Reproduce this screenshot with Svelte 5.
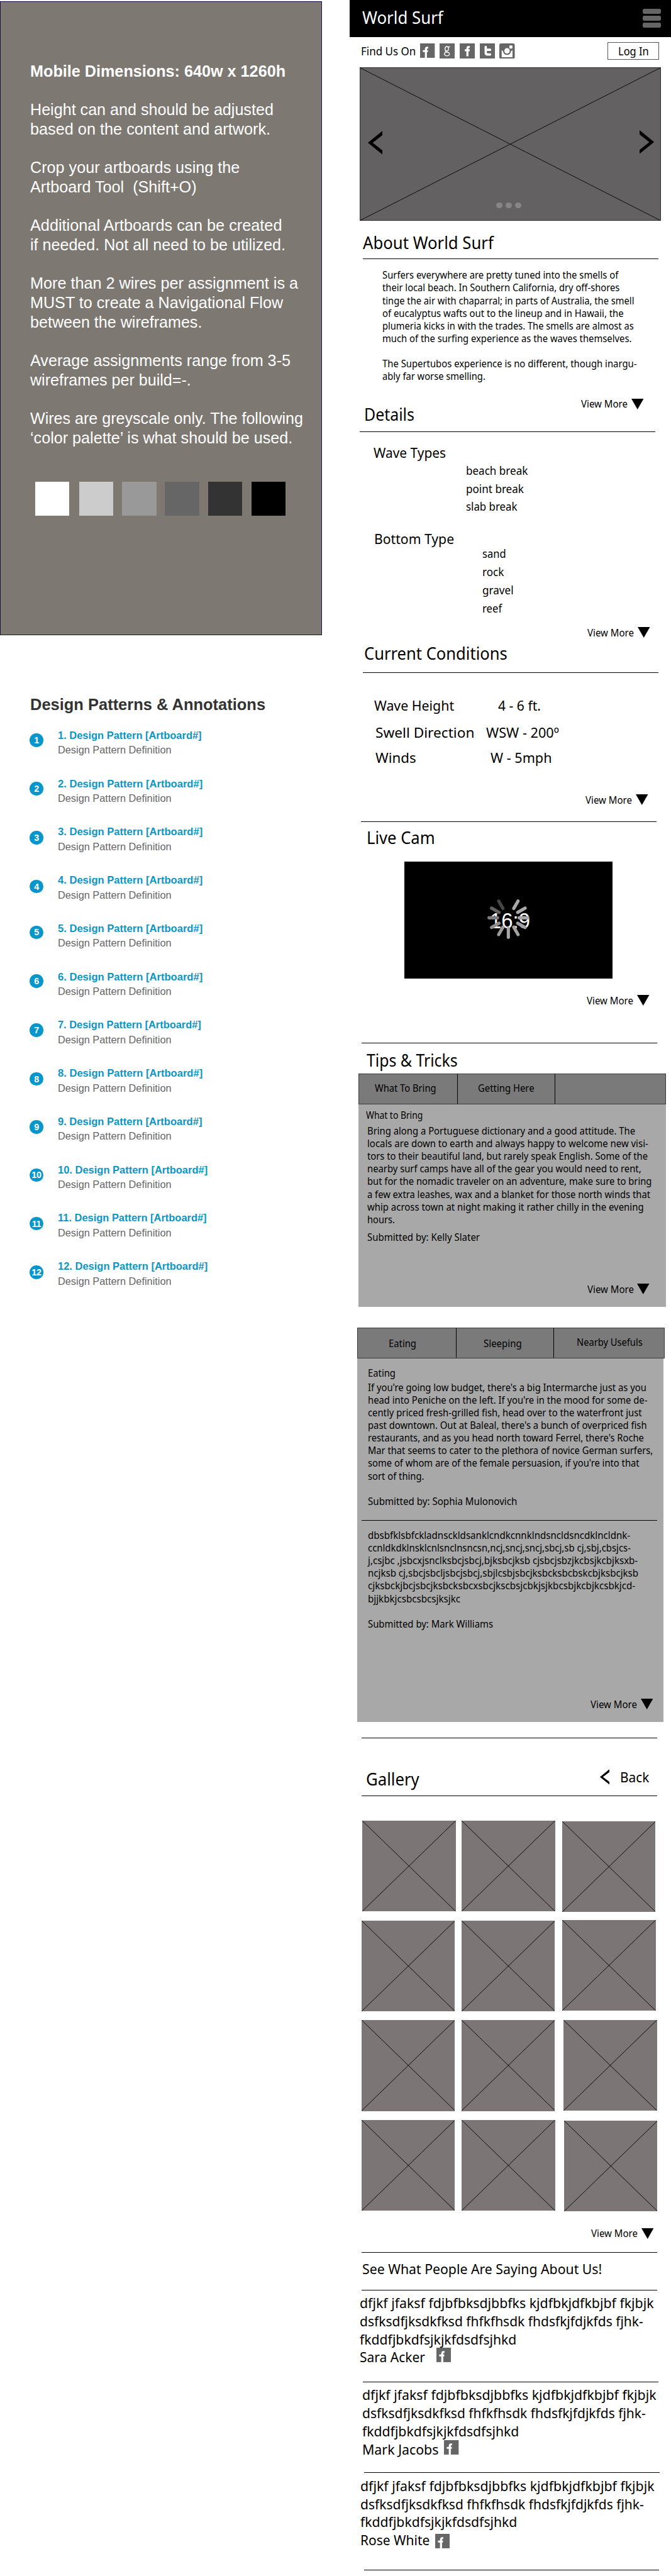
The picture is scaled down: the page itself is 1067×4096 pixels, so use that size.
<script>
  const REM = 7.993;

  // Squeezes a line of text horizontally so it spans the given width (in rem).
  function fit(node, width) {
    const natural = node.getBoundingClientRect().width;
    if (width && natural) node.style.transform = `scaleX(${(width * REM) / natural})`;
  }

  const brief = [
    ['Mobile Dimensions: 640w x 1260h', 50.8, true], null,
    ['Height can and should be adjusted', 48.4],
    ['based on the content and artwork.', 47.8], null,
    ['Crop your artboards using the', 41.7],
    ['Artboard Tool \u00a0(Shift+O)', 33.1], null,
    ['Additional Artboards can be created', 50.1],
    ['if needed. Not all need to be utilized.', 50.8], null,
    ['More than 2 wires per assignment is a', 53.3],
    ['MUST to create a Navigational Flow', 50.3],
    ['between the wireframes.', 34.2], null,
    ['Average assignments range from 3-5', 51.8],
    ['wireframes per build=-.', 32], null,
    ['Wires are greyscale only. The following', 54.3],
    ['‘color palette’ is what should be used.', 52.2]
  ];

  const swatches = [
    ['#ffffff', 6.9], ['#cccccc', 1.9], ['#999999', 1.8],
    ['#666666', 1.7], ['#333333', 1.8], ['#000000', 1.8]
  ];

  const patterns = [
    [0, 28.6], [0.04, 28.8], [0.16, 28.8], [0.28, 28.8], [-0.23, 28.8], [-0.1, 28.8],
    [0.01, 28.5], [0.14, 28.8], [0.11, 28.7], [0.06, 29.8], [0.11, 29.6], [0.23, 29.8]
  ];

  const about = [
    ['Surfers everywhere are pretty tuned into the smells of', 46.95],
    ['their local beach. In Southern California, dry off-shores', 47.2],
    ['tinge the air with chaparral; in parts of Australia, the smell', 50.1],
    ['of eucalyptus wafts out to the lineup and in Hawaii, the', 48],
    ['plumeria kicks in with the trades. The smells are almost as', 50],
    ['much of the surfing experience as the waves themselves.', 49.6],
    null,
    ['The Supertubos experience is no different, though inargu-', 50.6],
    ['ably far worse smelling.', 20.5]
  ];

  const waves = [['beach break', 12.3], ['point break', 11.5], ['slab break', 10.2]];
  const bottoms = [['sand', 4.7], ['rock', 4.3], ['gravel', 6.2], ['reef', 3.9]];

  const bring = [
    ['Bring along a Portuguese dictionary and a good attitude. The', 53.3],
    ['locals are down to earth and always happy to welcome new visi-', 55.9],
    ['tors to their beautiful land, but rarely speak English. Some of the', 55.8],
    ['nearby surf camps have all of the gear you would need to rent,', 54.5],
    ['but for the nomadic traveler on an adventure, make sure to bring', 56.6],
    ['a few extra leashes, wax and a blanket for those north winds that', 56.3],
    ['whip across town at night making it rather chilly in the evening', 55],
    ['hours.', 5.5]
  ];

  const eating = [
    ["If you're going low budget, there's a big Intermarche just as you", 55.4],
    ["head into Peniche on the left. If you're in the mood for some de-", 55.6],
    ['cently priced fresh-grilled fish, head over to the waterfront just', 54.5],
    ["past downtown. Out at Baleal, there's a bunch of overpriced fish", 55.5],
    ["restaurants, and as you head north toward Ferrel, there's Roche", 54.9],
    ['Mar that seems to cater to the plethora of novice German surfers,', 56.7],
    ["some of whom are of the female persuasion, if you're into that", 54],
    ['sort of thing.', 11.2]
  ];

  const filler = [
    ['dbsbfklsbfckladnsckldsanklcndkcnnklndsncldsncdklncldnk-', 52.2],
    ['ccnldkdklnsklcnlsnclnsncsn,ncj,sncj,sncj,sbcj,sb cj,sbj,cbsjcs-', 52.3],
    ['j,csjbc ,jsbcxjsnclksbcjsbcj,bjksbcjksb cjsbcjsbzjkcbsjkcbjksxb-', 53.7],
    ['ncjksb cj,sbcjsbcljsbcjsbcj,sbjlcsbjsbcjksbcksbcbskcbjksbcjksb', 53.8],
    ['cjksbckjbcjsbcjksbcksbcxsbcjkscbsjcbkjsjkbcsbjkcbjkcsbkjcd-', 53.2],
    ['bjjkbkjcsbcsbcsjksjkc', 18.4]
  ];

  const quote = [
    ['dfjkf jfaksf fdjbfbksdjbbfks kjdfbkjdfkbjbf fkjbjk', 58.5],
    ['dsfksdfjksdkfksd fhfkfhsdk fhdsfkjfdjkfds fjhk-', 56.4],
    ['fkddfjbkdfsjkjkfdsdfsjhkd', 31.2]
  ];

  // left margin and top nudge of every thumbnail, row by row
  const gallery = [
    [[2.59, 0], [1.2, 0], [1.33, 0.1]],
    [[2.38, 0], [1.33, 0], [1.49, -0.1]],
    [[2.38, 0], [1.33, 0], [1.7, -0.05]],
    [[2.38, 0], [1.41, 0], [1.71, 0.06]]
  ];

  const spokes = [
    [30, '#a9a9a9'], [60, '#a9a9a9'], [90, '#a6a6a6'], [120, '#a0a0a0'], [150, '#a3a3a3'],
    [180, '#a6a6a6'], [210, '#9b9b9b'], [240, '#8e8e8e'], [270, '#7c7c7c'],
    [300, '#636363'], [330, '#454545']
  ];
</script>

{#snippet line(t, w, cls = '')}
  <span class="line {cls}"><span class="fit" use:fit={w}>{t}</span></span>
{/snippet}

{#snippet lines(list, cls)}
  {#each list as l}
    {#if l}
      <span class="line {cls}" class:bold={l[2]}><span class="fit" use:fit={l[1]}>{l[0]}</span></span>
    {:else}
      <span class="line {cls}"></span>
    {/if}
  {/each}
{/snippet}

{#snippet more(cls)}
  <div class="more {cls}">
    <span class="more-text">{@render line('View More', 9.25, 'small')}</span>
    <svg class="tri" viewBox="0 0 24 21" preserveAspectRatio="none"><path d="M0 0H24L12 21Z" /></svg>
  </div>
{/snippet}

{#snippet cross()}
  <svg class="cross" viewBox="0 0 100 100" preserveAspectRatio="none">
    <path d="M0 0L100 100M100 0L0 100" vector-effect="non-scaling-stroke" />
  </svg>
{/snippet}

{#snippet fbCut(cls)}
  <svg class="fb {cls}" viewBox="0 0 29 29" preserveAspectRatio="none">
    <rect width="29" height="29" fill="#666" />
    <path d="M16 8.5H14Q11.5 8.5 11.5 12V29M5.5 15.5H15.5" fill="none" stroke="#fff" stroke-width="4" />
  </svg>
{/snippet}

<div class="page">
  <aside class="left">
    <section class="brief">
      {@render lines(brief, 'arial')}
      <div class="swatches">
        {#each swatches as [c, m]}
          <i class="swatch" style="background:{c};margin-left:{m}rem"></i>
        {/each}
      </div>
    </section>
    <section class="notes">
      {@render line('Design Patterns & Annotations', 46.8, 'arial bold')}
      <ul>
        {#each patterns as [dy, w], i}
          <li>
            <b class="badge" style="margin-top:{dy}rem">{i + 1}</b>
            <div class="note">
              {@render line(`${i + 1}. Design Pattern [Artboard#]`, w, 'note-title')}
              {@render line('Design Pattern Definition', 22.6, 'note-def')}
            </div>
          </li>
        {/each}
      </ul>
    </section>
  </aside>

  <main class="right">
    <header>
      {@render line('World Surf', 16.1, 'head')}
      <div class="burger"><i></i><i></i><i></i></div>
    </header>

    <div class="social">
      <div class="find">{@render line('Find Us On', 10.9, 'mid')}</div>
      <div class="icons">
        {@render fbCut('')}
        <svg viewBox="0 0 30 30" preserveAspectRatio="none">
          <rect width="30" height="30" fill="#666" />
          <g fill="none" stroke="#fff">
            <ellipse cx="14" cy="10.3" rx="3.4" ry="4.2" stroke-width="1.7" />
            <ellipse cx="14.3" cy="20.6" rx="4.8" ry="3.7" stroke-width="1.8" />
            <path d="M16.5 7L20 6.4M11.5 13.8Q10.5 16 15 16.8" stroke-width="1.7" />
          </g>
        </svg>
        <svg viewBox="0 0 30 30" preserveAspectRatio="none">
          <rect width="30" height="30" fill="#666" />
          <path d="M19.5 7H17.8Q15 7 15 10V25M10 13.2H19.5" fill="none" stroke="#fff" stroke-width="4" />
        </svg>
        <svg viewBox="0 0 30 30" preserveAspectRatio="none">
          <rect width="30" height="30" fill="#666" />
          <path d="M11.5 7V18Q11.5 21.5 15 21.5H20M11.5 12.5H20" fill="none" stroke="#fff" stroke-width="4.6" stroke-linecap="round" />
        </svg>
        <svg viewBox="0 0 30 30" preserveAspectRatio="none">
          <rect width="30" height="30" rx="3.5" fill="#666" />
          <path d="M4.6 13V27H25.6V13L22.5 15A8 8 0 0 1 7.7 15Z" fill="#fff" />
          <circle cx="15" cy="14.5" r="6.6" fill="#fff" stroke="#666" stroke-width="2.6" />
          <rect x="19.5" y="4" width="6" height="6" rx="1" fill="#fff" />
        </svg>
      </div>
      <div class="login">{@render line('Log In', 6.1, 'mid')}</div>
    </div>

    <div class="hero">
      {@render cross()}
      <svg class="prev" viewBox="0 0 29 47"><path d="M29 0V8.5L9.6 23.7L29 39V47L0 23.7Z" /></svg>
      <svg class="next" viewBox="0 0 29 47"><path d="M0 0V8.5L19.4 23.7L0 39V47L29 23.7Z" /></svg>
      <div class="dots"><i></i><i></i><i></i></div>
    </div>

    <section class="about">
      {@render line('About World Surf', 26, 'head')}
      <hr />
      <div class="copy">{@render lines(about, 'body')}</div>
      {@render more('m-about')}
    </section>

    <section class="details">
      {@render line('Details', 10, 'head')}
      <hr />
      <div class="type">{@render line('Wave Types', 14.4, 'sub')}</div>
      <div class="waves">{@render lines(waves, 'item')}</div>
      <div class="type second">{@render line('Bottom Type', 15.9, 'sub')}</div>
      <div class="bottoms">{@render lines(bottoms, 'item')}</div>
      {@render more('m-details')}
    </section>

    <section class="current">
      {@render line('Current Conditions', 28.5, 'head')}
      <hr />
      <div class="cond c1"><div class="key">{@render line('Wave Height', 15.9, 'sub')}</div>{@render line('4 - 6 ft.', 8.5, 'sub')}</div>
      <div class="cond c2"><div class="key">{@render line('Swell Direction', 19.7, 'sub')}</div>{@render line('WSW - 200º', 14.5, 'sub')}</div>
      <div class="cond c3"><div class="key">{@render line('Winds', 8.1, 'sub')}</div>{@render line('W - 5mph', 12.2, 'sub')}</div>
      {@render more('m-current')}
      <hr class="end" />
    </section>

    <section class="cam">
      {@render line('Live Cam', 13.6, 'head')}
      <div class="video">
        <div class="ratio">{@render line('16:9', 8, 'ratio-text')}</div>
        <svg class="spinner" viewBox="-43 -43 86 86">
          {#each spokes as [a, c]}
            <line y1="-21.5" y2="-38.5" stroke={c} stroke-width="6.4" stroke-linecap="round" transform="rotate({a})" />
          {/each}
        </svg>
      </div>
      {@render more('m-cam')}
      <hr />
    </section>

    <section class="tips">
      <div class="tips-title">{@render line('Tips & Tricks', 18.1, 'head')}</div>
      <div class="tabs t1">
        <div class="tab a">{@render line('What To Bring', 12.2, 'small')}</div>
        <div class="tab b">{@render line('Getting Here', 11.2, 'small')}</div>
        <div class="tab c"></div>
      </div>
      <div class="panel p1">
        <div class="sub-a">{@render line('What to Bring', 11.3, 'body')}</div>
        <div class="text-a">{@render lines(bring, 'body')}</div>
        <div class="by-a">{@render line('Submitted by: Kelly Slater', 22.4, 'body')}</div>
        {@render more('m-p1')}
      </div>
    </section>

    <section class="places">
      <div class="tabs t2">
        <div class="tab a">{@render line('Eating', 5.5, 'small')}</div>
        <div class="tab b">{@render line('Sleeping', 7.6, 'small')}</div>
        <div class="tab c">{@render line('Nearby Usefuls', 13.1, 'small')}</div>
      </div>
      <div class="panel p2">
        <div class="in eat">{@render line('Eating', 5.5, 'body')}</div>
        <div class="in eat-text">{@render lines(eating, 'body')}</div>
        <div class="in by-1">{@render line('Submitted by: Sophia Mulonovich', 29.7, 'body')}</div>
        <hr />
        <div class="in fill-text">{@render lines(filler, 'body')}</div>
        <div class="in by-2">{@render line('Submitted by: Mark Williams', 24.9, 'body')}</div>
        {@render more('m-p2')}
      </div>
      <hr class="end" />
    </section>

    <section class="gallery">
      <div class="g-head">
        {@render line('Gallery', 10.6, 'head')}
        <div class="back">
          <svg viewBox="0 0 19 31" preserveAspectRatio="none"><path d="M19 0V5.5L6 15.6L19 25.7V31L0 15.6Z" /></svg>
          {@render line('Back', 5.8, 'sub')}
        </div>
      </div>
      <hr />
      <div class="rows">
        {#each gallery as row}
          <div class="row">
            {#each row as [ml, mt]}
              <div class="tile" style="margin-left:{ml}rem;margin-top:{mt}rem">{@render cross()}</div>
            {/each}
          </div>
        {/each}
      </div>
      {@render more('m-gal')}
    </section>

    <section class="people">
      <hr class="r1" />
      <div class="see">{@render line('See What People Are Saying About Us!', 47.7, 'quote')}</div>
      <hr class="r2" />
      <div class="q q1">
        {@render lines(quote, 'quote')}
        <div class="who"><span class="n1">{@render line('Sara Acker', 13, 'quote')}</span>{@render fbCut('')}</div>
      </div>
      <hr class="r3" />
      <div class="q q2">
        {@render lines(quote, 'quote')}
        <div class="who"><span class="n2">{@render line('Mark Jacobs', 15.2, 'quote')}</span>{@render fbCut('')}</div>
      </div>
      <hr class="r4" />
      <div class="q q3">
        {@render lines(quote, 'quote')}
        <div class="who"><span class="n3">{@render line('Rose White', 13.8, 'quote')}</span>{@render fbCut('low')}</div>
      </div>
      <hr class="r5" />
    </section>
  </main>
</div>

<style>
  /* 1rem stands for ten design units */
  :global(html) { font-size: 7.993px; }
  :global(body) { margin: 0; background: #fff; }

  .page { display: flex; width: 1067px; height: 4096px; overflow: hidden; background: #fff; color: #000; font-family: 'Noto Sans', 'Open Sans', sans-serif; }
  .left { width: 69.5rem; flex: none; display: flex; flex-direction: column; font-family: 'Liberation Sans', Arial, sans-serif; }
  .right { width: 64rem; flex: none; display: flex; flex-direction: column; }
  section { display: flex; flex-direction: column; flex: none; }
  svg { display: block; flex: none; }
  i { display: block; }

  .line { display: block; white-space: pre; }
  .fit { display: inline-block; transform-origin: 0 50%; white-space: pre; }
  .head { font-size: 3.4rem; line-height: 4.1rem; height: 4rem; }
  .sub { font-size: 2.75rem; line-height: 3.7rem; height: 3.6rem; }
  .body { font-size: 1.98rem; line-height: 2.62rem; height: 2.52rem; }
  .item { font-size: 2.2rem; line-height: 3.7rem; height: 3.6rem; }
  .small { font-size: 1.98rem; line-height: 2.5rem; height: 2.4rem; }
  .mid { font-size: 2.25rem; line-height: 2.5rem; height: 2.4rem; }
  .quote { font-size: 2.8rem; line-height: 3.75rem; height: 3.6rem; }
  .arial { font-size: 3.2rem; line-height: 3.9rem; height: 3.84rem; }
  .bold { font-weight: 700; }

  hr { border: 0; margin: 0; height: 1px; width: 58.77rem; background: #000; flex: none; }

  /* left column */
  .brief { box-sizing: border-box; width: 64.1rem; height: 126.1rem; margin-top: 0.3rem; padding: 11.8rem 0 0 5.9rem; background: #7d7872; border: 1px solid #14143c; color: #fff; }
  .swatches { display: flex; margin: 6.8rem 0 0 -5.9rem; }
  .swatch { width: 6.8rem; height: 6.75rem; }
  .notes { margin-top: 11.8rem; padding-left: 6rem; color: #333; }
  ul { list-style: none; margin: 3.89rem 0 0; padding: 0; }
  li { display: flex; height: 9.603rem; align-items: flex-start; }
  .badge { display: flex; align-items: center; justify-content: center; width: 2.7rem; height: 2.7rem; margin-left: -0.1rem; border-radius: 50%; background: #0596cc; color: #fff; font-size: 1.8rem; letter-spacing: -0.05rem; }
  .note { margin: -1.07rem 0 0 2.9rem; }
  .note-title { font-size: 2.04rem; line-height: 2.95rem; height: 2.95rem; font-weight: 700; color: #0a96c6; }
  .note-def { font-size: 2.04rem; line-height: 2.95rem; height: 2.95rem; color: #666; }

  /* top of the wireframe */
  header { box-sizing: border-box; height: 7.4rem; padding: 1.45rem 2rem 0 2.55rem; display: flex; justify-content: space-between; background: #000; color: #fff; }
  .burger { display: flex; flex-direction: column; gap: 0.4rem; margin-top: 0.25rem; }
  .burger i { width: 3.7rem; height: 1rem; border-radius: 0.3rem; background: #666; }
  .social { display: flex; height: 6rem; padding-left: 2.3rem; align-items: flex-start; }
  .find { width: 11.8rem; margin-top: 1.52rem; }
  .icons { display: flex; gap: 0.92rem; margin-top: 1.2rem; width: 37.2rem; }
  .icons svg { width: 3.07rem; height: 3.07rem; }
  .fb, .icons .fb { width: 2.92rem; height: 2.87rem; }
  .login { box-sizing: border-box; width: 10.35rem; height: 3.55rem; margin-top: 0.93rem; padding: 0.42rem 0 0 2.1rem; border: 1px solid #555; }
  .hero { box-sizing: border-box; position: relative; width: 59.9rem; height: 30.57rem; margin-left: 2.05rem; background: #636162; border: 1px solid #2f2f2f; }
  .cross { width: 100%; height: 100%; }
  .cross path { stroke: #0c0c0c; stroke-width: 1; fill: none; }
  .prev, .next { position: absolute; width: 2.9rem; height: 4.7rem; top: 12.5rem; }
  .prev { left: 1.5rem; }
  .next { right: 1.2rem; top: 12.4rem; }
  .dots { position: absolute; left: 27.1rem; top: 26.7rem; display: flex; gap: 0.6rem; }
  .dots i { width: 1.25rem; height: 1.25rem; border-radius: 50%; background: #868686; }

  .more { display: flex; height: 2.4rem; flex: none; }
  .more-text { width: 10rem; }
  .tri { width: 2.44rem; height: 2.12rem; margin-top: 0.18rem; }

  .about { padding-left: 2.68rem; margin-top: 2.31rem; }
  .about hr { margin-top: 1.15rem; }
  .copy { margin: 1.9rem 0 0 3.84rem; }
  .m-about { margin: 2.97rem 0 0 43.44rem; }

  .details { margin-top: -1.01rem; padding-left: 2.89rem; }
  .details hr { margin: 1.33rem 0 0 -0.84rem; }
  .type { margin: 2.22rem 0 0 1.88rem; }
  .type.second { margin: 2.73rem 0 0 2.08rem; }
  .waves { margin: 0.04rem 0 0 20.26rem; }
  .bottoms { margin: -0.52rem 0 0 23.56rem; }
  .m-details { margin: 1.75rem 0 0 44.52rem; }

  .current { margin-top: 1.03rem; padding-left: 2.7rem; }
  .current hr { margin-top: 1.75rem; }
  .current .head { margin-left: 0.3rem; }
  .cond { display: flex; }
  .c1 { margin: 4.62rem 0 0 2.19rem; height: 5.43rem; }
  .c2 { margin-left: 2.53rem; height: 4.97rem; }
  .c3 { margin-left: 2.53rem; height: 3.6rem; }
  .c1 .key { width: 24.7rem; }
  .c2 .key { width: 22rem; }
  .c3 .key { width: 22.9rem; }
  .m-current { margin: 5.38rem 0 0 44.3rem; }
  .current hr.end { margin: 3.12rem 0 0 -0.4rem; }

  .cam { margin-top: 1.18rem; padding-left: 3.4rem; }
  .video { position: relative; width: 41.4rem; height: 23.3rem; margin: 2.72rem 0 0 7.59rem; background: #000; color: #fff; }
  .ratio { position: absolute; left: 17rem; top: 9.3rem; font-family: 'Liberation Sans', Arial, sans-serif; }
  .ratio-text { font-size: 4.3rem; line-height: 5.2rem; height: 5.2rem; }
  .spinner { position: absolute; left: 16.33rem; top: 6.9rem; width: 8.6rem; height: 8.6rem; }
  .m-cam { margin: 3.12rem 0 0 43.85rem; }
  .cam hr { margin: 7.2rem 0 0 -0.9rem; }

  .tips { margin-top: 1.36rem; }
  .tips-title { margin-left: 3.4rem; }
  .tabs { box-sizing: border-box; display: flex; background: #7a7a7a; border: 1px solid #3a3a3a; width: 61.15rem; flex: none; }
  .tab { box-sizing: border-box; border-right: 1px solid #000; }
  .tab.a { width: 19.6rem; }
  .tab.b { width: 19.4rem; }
  .tab.c { border: 0; }
  .t1 { height: 6.07rem; margin: 0.68rem 0 0 1.8rem; }
  .t1 .a { padding: 1.55rem 0 0 3.2rem; }
  .t1 .b { padding: 1.55rem 0 0 4.05rem; }
  .panel { background: #a8a8a8; flex: none; display: flex; flex-direction: column; }
  .p1 { width: 61.2rem; height: 40.32rem; margin-left: 1.8rem; }
  .sub-a { margin: 0.93rem 0 0 1.46rem; }
  .text-a { margin: 0.59rem 0 0 1.71rem; }
  .by-a { margin: 1.02rem 0 0 1.71rem; }
  .m-p1 { margin: 7.84rem 0 0 45.5rem; }

  .places { margin-top: 4.21rem; }
  .t2 { height: 6.03rem; margin-left: 1.55rem; }
  .t2 .a { padding: 1.65rem 0 0 6.1rem; }
  .t2 .b { padding: 1.65rem 0 0 5.4rem; }
  .t2 .c { padding: 1.48rem 0 0 4.6rem; }
  .p2 { width: 60.9rem; height: 72.34rem; margin-left: 1.59rem; }
  .in { margin-left: 2.13rem; }
  .eat { margin-top: 1.65rem; }
  .eat-text { margin-top: 0.33rem; }
  .by-1 { margin-top: 2.6rem; }
  .p2 hr { margin: 2.42rem 0 0 0.91rem; }
  .fill-text { margin-top: 1.62rem; }
  .by-2 { margin-top: 2.48rem; }
  .m-p2 { margin: 13.5rem 0 0 46.37rem; }
  .places hr.end { margin: 3.16rem 0 0 2.5rem; }

  .gallery { margin-top: 6.07rem; }
  .g-head { display: flex; height: 4rem; padding-left: 3.3rem; }
  .g-head > .head { width: 46.5rem; }
  .back { display: flex; }
  .back svg { width: 1.92rem; height: 3.1rem; margin: 0.05rem 2.17rem 0 0; }
  .back .line { margin-top: -0.15rem; }
  .gallery hr { margin: 1.35rem 0 0 2.5rem; }
  .rows { margin-top: 4.8rem; height: 77.66rem; }
  .row { display: flex; height: 19.87rem; }
  .tile { width: 18.6rem; height: 18.04rem; background: #7c7575; }
  .m-gal { margin: 3.26rem 0 0 48.08rem; }

  .people { margin-top: 2.5rem; }
  .r1 { margin-left: 2.5rem; }
  .see { margin: 1.42rem 0 0 2.55rem; }
  .r2 { margin: 2.47rem 0 0 2.5rem; }
  .q1 { margin: 0.58rem 0 0 2.05rem; }
  .r3 { margin: 3.1rem 0 0 2.7rem; }
  .q2 { margin: 0.68rem 0 0 2.55rem; }
  .r4 { margin: 2.79rem 0 0 3rem; }
  .q3 { margin: 0.77rem 0 0 2.18rem; }
  .r5 { margin: 4.1rem 0 0 2.9rem; }
  .who { display: flex; height: 3.6rem; }
  .n1 { width: 15.25rem; }
  .n2 { width: 16.33rem; }
  .n3 { width: 14.9rem; }
  .low { margin-top: 0.6rem; }
</style>
